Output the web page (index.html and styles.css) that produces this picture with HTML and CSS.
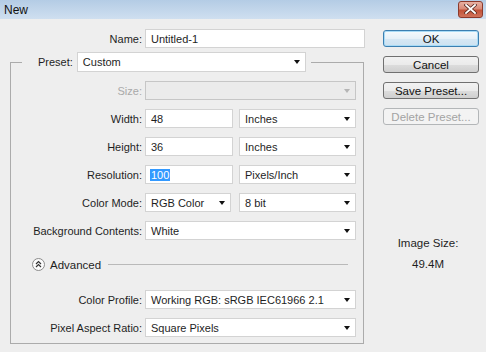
FILE: index.html
```html
<!DOCTYPE html>
<html lang="en">
<head>
    <meta charset="UTF-8">
    <title>New</title>
    <link rel="stylesheet" href="styles.css">
</head>
<body>
    <div class="window">
        <div class="titlebar">
            <span class="title">New</span>
            <span class="close">
                <svg width="13" height="10" viewBox="0 0 13 10">
                    <path d="M2 1 L11 9 M11 1 L2 9" stroke="#5a2a20" stroke-width="3.4" stroke-linecap="square"/>
                    <path d="M2 1 L11 9 M11 1 L2 9" stroke="#ffffff" stroke-width="1.8" stroke-linecap="square"/>
                </svg>
            </span>
        </div>

        <div class="content">
            <div class="form">
                <div class="name-row">
                    <span class="label">Name:</span>
                    <div class="field">Untitled-1</div>
                </div>

                <fieldset class="group">
                    <legend class="preset">
                        <span class="label">Preset:</span>
                        <div class="select preset-select">Custom<span class="arrow"></span></div>
                    </legend>

                    <div class="row">
                        <span class="label disabled">Size:</span>
                        <div class="select wide off"><span class="arrow"></span></div>
                    </div>
                    <div class="row">
                        <span class="label">Width:</span>
                        <div class="pair">
                            <div class="field num">48</div>
                            <div class="select unit">Inches<span class="arrow"></span></div>
                        </div>
                    </div>
                    <div class="row">
                        <span class="label">Height:</span>
                        <div class="pair">
                            <div class="field num">36</div>
                            <div class="select unit">Inches<span class="arrow"></span></div>
                        </div>
                    </div>
                    <div class="row">
                        <span class="label">Resolution:</span>
                        <div class="pair">
                            <div class="field num"><span class="picked">100</span></div>
                            <div class="select unit">Pixels/Inch<span class="arrow"></span></div>
                        </div>
                    </div>
                    <div class="row">
                        <span class="label">Color Mode:</span>
                        <div class="pair">
                            <div class="select mode">RGB Color<span class="arrow"></span></div>
                            <div class="select unit">8 bit<span class="arrow"></span></div>
                        </div>
                    </div>
                    <div class="row">
                        <span class="label">Background Contents:</span>
                        <div class="select wide">White<span class="arrow"></span></div>
                    </div>

                    <div class="advanced">
                        <svg width="13" height="13" viewBox="0 0 13 13">
                            <circle cx="6.5" cy="6.5" r="6" fill="#fbfbfb" stroke="#8a8a8a"/>
                            <path d="M4 6 L6.5 3.6 L9 6 M4 9 L6.5 6.6 L9 9" fill="none" stroke="#333" stroke-width="1.2"/>
                        </svg>
                        <span>Advanced</span>
                        <span class="rule"></span>
                    </div>

                    <div class="row">
                        <span class="label">Color Profile:</span>
                        <div class="select wide">Working RGB: sRGB IEC61966 2.1<span class="arrow"></span></div>
                    </div>
                    <div class="row">
                        <span class="label">Pixel Aspect Ratio:</span>
                        <div class="select wide">Square Pixels<span class="arrow"></span></div>
                    </div>
                </fieldset>
            </div>

            <div class="side">
                <button class="btn default">OK</button>
                <button class="btn">Cancel</button>
                <button class="btn">Save Preset...</button>
                <button class="btn" disabled>Delete Preset...</button>

                <div class="image-size">
                    <div>Image Size:</div>
                    <div class="size-value">49.4M</div>
                </div>
            </div>
        </div>
    </div>
</body>
</html>
```

FILE: styles.css
```css
body {
    margin: 0;
    font-family: 'Liberation Sans', Arial, sans-serif;
    font-size: 11px;
    color: #1e1e1e;
    background-color: #eeeeee;
}

.window {
    width: 486px;
    height: 352px;
    overflow: hidden;
}

.titlebar {
    height: 19px;
    display: flex;
    align-items: center;
    justify-content: space-between;
    padding: 0 3px 0 4px;
    background: linear-gradient(#b4cce5, #cfdff0);
}

.title {
    font-size: 12px;
    color: #111;
}

.close {
    width: 23px;
    height: 15px;
    margin-top: -1px;
    border: 1px solid #8c3a2c;
    border-radius: 3px;
    display: flex;
    align-items: center;
    justify-content: center;
    background: linear-gradient(#e7b0a2 0%, #d98a77 45%, #c35238 55%, #d0735c 100%);
}

.content {
    display: flex;
}

.form {
    width: 372px;
    padding-top: 10px;
}

.label {
    text-align: right;
    white-space: nowrap;
}

.label.disabled {
    color: #a9a9a9;
}

.name-row {
    display: grid;
    grid-template-columns: 142px 220px;
    column-gap: 3px;
    align-items: center;
}

.field,
.select {
    height: 19px;
    box-sizing: border-box;
    background-color: #fff;
    border: 1px solid #d3d3d3;
    padding: 0 5px;
    display: flex;
    align-items: center;
    font-size: 11px;
    white-space: nowrap;
}

.select {
    justify-content: space-between;
}

.arrow {
    width: 0;
    height: 0;
    border-left: 3.5px solid transparent;
    border-right: 3.5px solid transparent;
    border-top: 4px solid #111;
}

.select.off {
    background-color: #ebebeb;
    border-color: #c6c6c6;
    justify-content: flex-end;
}

.select.off .arrow {
    border-top-color: #b5b5b5;
}

.group {
    margin: 4px 0 0 10px;
    padding: 9px 6px 6px 0;
    width: 354px;
    box-sizing: border-box;
    min-inline-size: 0;
    border: 1px solid #ababab;
    display: flex;
    flex-direction: column;
    gap: 9px;
}

.preset {
    margin-left: 11px;
    padding: 0 5px 0 16px;
    display: flex;
    align-items: center;
    gap: 4px;
}

.preset-select {
    width: 229px;
    height: 20px;
}

.row {
    display: grid;
    grid-template-columns: 131px 211px;
    column-gap: 3px;
    align-items: center;
}

.pair {
    display: flex;
    justify-content: space-between;
}

.num {
    width: 88px;
}

.mode {
    width: 86px;
}

.unit {
    width: 117px;
}

.picked {
    background-color: #3399ff;
    color: #fff;
    padding: 0 1px;
    margin-left: -1px;
}

.advanced {
    display: flex;
    align-items: center;
    gap: 5px;
    padding: 9px 9px 10px 21px;
    font-size: 11.5px;
}

.rule {
    flex: 1;
    height: 1px;
    margin-left: 2px;
    background-color: #b9b9b9;
}

.side {
    width: 96px;
    margin-left: 11px;
    padding-top: 11px;
    display: flex;
    flex-direction: column;
    gap: 9px;
}

.btn {
    height: 17px;
    padding: 0;
    font-family: inherit;
    font-size: 11.5px;
    color: #111;
    border: 1px solid #707070;
    border-radius: 3px;
    background: linear-gradient(#f2f2f2 0%, #ebebeb 50%, #dddddd 51%, #cfcfcf 100%);
}

.btn.default {
    border-color: #3c7fb1;
    background: linear-gradient(#f6fafd 0%, #e7f1f8 50%, #d7e8f4 51%, #cde2f1 100%);
    box-shadow: inset 0 0 0 1px #a9dbf6;
}

.btn:disabled {
    color: #a3a3a3;
    border-color: #b3b6b8;
    background: #f3f3f3;
}

.image-size {
    margin-top: 103px;
    text-align: center;
    font-size: 11.5px;
    margin-left: -6px;
}

.size-value {
    margin-top: 9px;
}
```
